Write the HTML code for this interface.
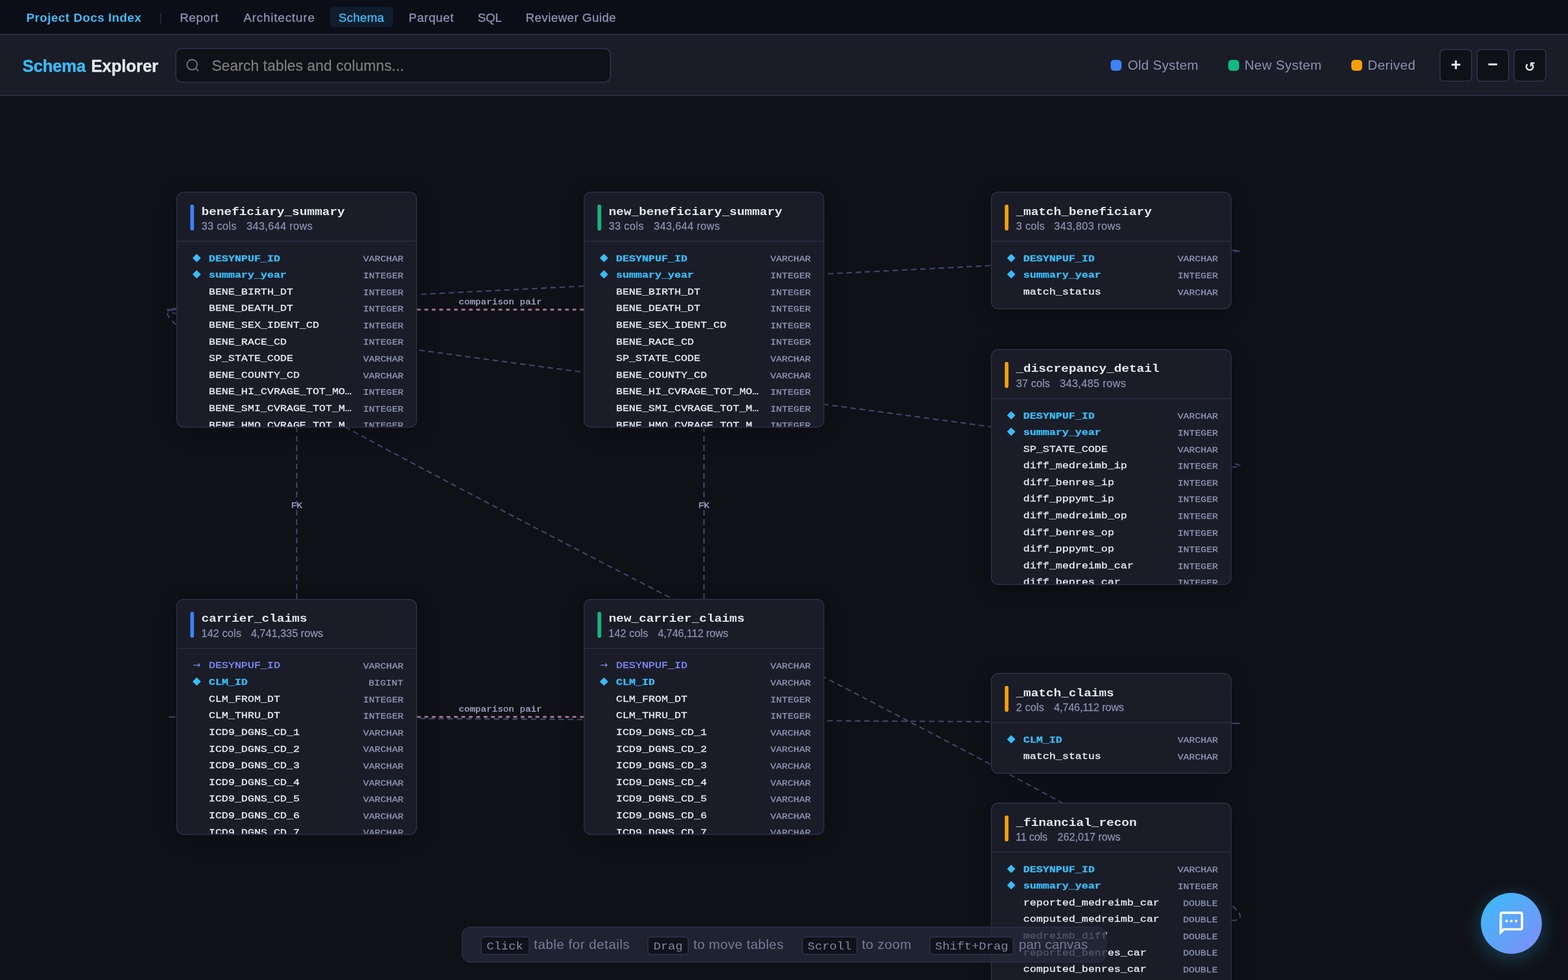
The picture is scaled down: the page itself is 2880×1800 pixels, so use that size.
<!DOCTYPE html>
<html lang="en">
<head>
<meta charset="utf-8">
<title>Schema Explorer</title>
<style>
*{box-sizing:border-box;margin:0;padding:0}
html,body{background:#0f1117;overflow:hidden;width:100%;height:100%}
body{font-family:"Liberation Sans",Arial,sans-serif;color:#e2e8f0}
#app{position:absolute;left:0;top:0;width:1440px;height:900px;overflow:hidden;zoom:2;will-change:transform}
@media (max-width:2000px){#app{zoom:1}}
a{text-decoration:none;color:inherit}
.tx{position:absolute;white-space:nowrap}
.topnav{position:absolute;left:0;top:0;width:1440px;height:32px;background:#0b0d17;border-bottom:1px solid #2d3148;font-size:11.2px;line-height:32px}
.topnav .brand{top:0.3px;font-weight:700;color:#38bdf8}
.topnav .sep{position:absolute;left:146.3px;top:0.35px;color:#2d3148;font-size:11px}
.topnav .nl{top:0.3px;color:#8b92b0;-webkit-text-stroke:.2px}
.topnav .nl.on{color:#38bdf8}
.topnav .pill{position:absolute;left:303.2px;top:6.15px;width:57.85px;height:18.85px;border-radius:4px;background:#0f1d2d}
.hdr{position:absolute;left:0;top:32px;width:1440px;height:56px;background:#1a1c28;border-bottom:1px solid #2d3148}
.hdr h1{position:absolute;left:0;top:1.4px;height:55px;line-height:55px;font-size:15.4px;font-weight:700;-webkit-text-stroke:.2px}
.hdr h1 .a{color:#38bdf8;top:0}
.hdr h1 .b{color:#e2e8f0;top:0}
.search{position:absolute;left:161px;top:12px;width:400px;height:32px;border:1px solid #2d3148;border-radius:6px;background:#0f1117}
.search .si{position:absolute;left:8px;top:8px;color:#6b7280}
.search .ph{top:0.5px;line-height:30px;font-size:13.6px;color:#7d7d7d;-webkit-text-stroke:.15px}
.legend i{position:absolute;top:23px;width:10px;height:10px;border-radius:3px}
.legend b{top:0.4px;line-height:55px;font-weight:400;font-size:12.3px;color:#8b92b0}
.zb{position:absolute;top:13px;width:30px;height:30px;border:1px solid #2d3148;border-radius:4px;background:#0f1117;color:#e2e8f0;text-align:center}
.zb .g{position:absolute;left:0;right:0;top:-.9px;line-height:28px;font-size:16px;font-weight:700}
.zb .rst{font-family:"DejaVu Sans",sans-serif;font-weight:700;font-size:12px;top:1.4px}
.canvas{position:absolute;left:0;top:88px;width:1440px;height:812px;overflow:hidden;background:#0f1117}
.world{position:absolute;left:0;top:0;width:0;height:0;transform-origin:0 0;transform:translate(162px,88px) scale(.85)}
.edges{position:absolute;left:0;top:0;overflow:visible}
.edges .e{fill:none;stroke:#40466a;stroke-width:1.5;stroke-dasharray:6 4}
.edges .e.cmp{stroke:#a37492;stroke-width:2;stroke-dasharray:4 4}
.edges .el{font-family:"Liberation Mono",monospace;font-size:8.85px;fill:#a3aaca;stroke:#a3aaca;stroke-width:.2px;text-anchor:middle}
.card{position:absolute;width:260px;overflow:hidden;background:#1a1c28;border:1px solid #2d3148;border-radius:8px;box-shadow:0 4px 20px rgba(0,0,0,.3)}
.ch{position:relative;height:53px;border-bottom:1px solid #2d3148}
.bar{position:absolute;left:14px;top:13px;width:4px;height:28px;border-radius:2px}
.old .bar{background:#3b82f6}.new .bar{background:#10b981}.der .bar{background:#f59e0b}
.nm{position:absolute;left:26px;top:11.1px;font-family:"Liberation Mono",monospace;font-weight:700;font-size:11.7px;line-height:20px;color:#e2e8f0;white-space:nowrap;transform:scaleX(1.1624);transform-origin:0 50%}
.mt{position:absolute;left:26px;top:29.2px;font-size:11.5px;line-height:14px;color:#8b92b0;white-space:nowrap}
.mt span{-webkit-text-stroke:.15px}

.cb{position:relative;padding:9px 0;height:200px;overflow:hidden}
.row{position:relative;height:18px;font-family:"Liberation Mono",monospace;font-size:10px;line-height:18px;white-space:nowrap}
.ic{position:absolute;left:12px;top:-1.4px;width:18px;text-align:center;font-family:"DejaVu Sans",sans-serif;font-size:11.6px;letter-spacing:0}
.ic.pk{color:#38bdf8}.ic.fk{color:#818cf8;font-size:10px;top:-1px}
.cn{position:absolute;left:34.1px;top:0.3px;color:#e2e8f0;-webkit-text-stroke:.22px;transform:scaleX(1.168);transform-origin:0 50%}
.row.pk .cn{color:#38bdf8;font-weight:700}
.row.fk .cn{color:#818cf8}
.ct{position:absolute;right:13.8px;top:0.8px;font-size:8.9px;color:#8b92b0;-webkit-text-stroke:.22px;transform:scaleX(1.168);transform-origin:100% 50%}
.hint{position:absolute;left:424px;top:763px;width:592px;height:33px;border:1px solid #2a2d40;border-radius:8px;background:rgba(36,40,56,.78);font-size:12.3px;line-height:31px;color:#767c96}
.hint kbd{position:absolute;top:8.05px;padding-top:1.1px;height:16.8px;font-family:"Liberation Mono",monospace;font-size:10.45px;line-height:14.6px;text-align:center;border:1px solid #2b2f45;border-radius:3px;background:#10111a;color:#80869f}
.hint em{font-style:normal;top:0}
.fab{position:absolute;left:1360px;top:820px;width:56px;height:56px;border-radius:50%;background:linear-gradient(135deg,#38bdf8,#818cf8);box-shadow:0 4px 20px rgba(56,189,248,.3);display:flex;align-items:center;justify-content:center}
.hint kbd span{display:inline-block;transform:scaleX(1.072)}

</style>
</head>
<body>
<div id="app">
<nav class="topnav">
<div class="pill"></div>
<a class="brand tx" id="brand" style="left:24.16px;letter-spacing:0.280px">Project Docs Index</a><span class="sep">|</span>
<a class="nl tx" id="n1" style="left:165.12px;letter-spacing:0.344px">Report</a>
<a class="nl tx" id="n2" style="left:223.62px;letter-spacing:0.498px">Architecture</a>
<a class="nl tx on" id="n3" style="left:310.88px;letter-spacing:0.168px">Schema</a>
<a class="nl tx" id="n4" style="left:375.28px;letter-spacing:0.347px">Parquet</a>
<a class="nl tx" id="n5" style="left:438.76px;letter-spacing:-0.160px">SQL</a>
<a class="nl tx" id="n6" style="left:482.70px;letter-spacing:0.255px">Reviewer Guide</a>
</nav>
<header class="hdr">
<h1><span class="a tx" id="t1a" style="left:20.64px;letter-spacing:-0.188px">Schema</span><span class="b tx" id="t1b" style="left:83.60px;letter-spacing:-0.094px">Explorer</span></h1>
<div class="search"><svg class="si" viewBox="0 0 24 24" width="14" height="14" fill="none" stroke="currentColor" stroke-width="2"><circle cx="11" cy="11" r="8"/><line x1="21" y1="21" x2="16.65" y2="16.65"/></svg><span class="ph tx" id="ph" style="left:32.44px;letter-spacing:0.051px">Search tables and columns...</span></div>
<div class="legend">
<i style="left:1020px;background:#3b82f6"></i><b class="tx" id="l1" style="left:1035.58px;letter-spacing:0.156px">Old System</b>
<i style="left:1128px;background:#10b981"></i><b class="tx" id="l2" style="left:1142.86px;letter-spacing:0.191px">New System</b>
<i style="left:1241px;background:#f59e0b"></i><b class="tx" id="l3" style="left:1255.94px;letter-spacing:0.253px">Derived</b>
</div>
<div class="zb" style="left:1322px"><span class="g plus">+</span></div>
<div class="zb" style="left:1356px"><span class="g minus">&minus;</span></div>
<div class="zb" style="left:1390px"><span class="g rst">&#8634;</span></div>
</header>
<main class="canvas">
<div class="world">
<svg class="edges" width="10" height="10"><path class="e" d="M1140,63.5 C1278,63.5 -138,127.5 0,127.5"/><path class="e" d="M1140,297.5 C1278,297.5 -138,127.5 0,127.5"/><path class="e" d="M1140,787.5 C1278,787.5 -138,127.5 0,127.5"/><path class="e" d="M1140,574.5 C1278,574.5 -138,567.5 0,567.5"/><path class="e" d="M130.0,440 L130.0,255"/><text class="el" transform="translate(130.0,341.5) scale(1.13,1)">FK</text><path class="e" d="M570.0,440 L570.0,255"/><text class="el" transform="translate(570.0,341.5) scale(1.13,1)">FK</text><path class="e cmp" d="M260,127.5 L440,127.5"/><text class="el" transform="translate(350.0,121.5) scale(1.13,1)">comparison pair</text><path class="e cmp" d="M260,567.5 L440,567.5"/><text class="el" transform="translate(350.0,561.5) scale(1.13,1)">comparison pair</text></svg>
<div class="card old" id="t1" style="left:0px;top:0px;height:255px"><div class="ch"><span class="bar"></span><div class="nm">beneficiary_summary</div><div class="mt"><span class="m1" style="margin-left:0.09px;letter-spacing:0.213px">33 cols</span><span class="m2" style="margin-left:10.75px;letter-spacing:0.204px">343,644 rows</span></div></div><div class="cb"><div class="row pk"><span class="ic pk">◆</span><span class="cn">DESYNPUF_ID</span><span class="ct">VARCHAR</span></div><div class="row pk"><span class="ic pk">◆</span><span class="cn">summary_year</span><span class="ct">INTEGER</span></div><div class="row "><span class="cn">BENE_BIRTH_DT</span><span class="ct">INTEGER</span></div><div class="row "><span class="cn">BENE_DEATH_DT</span><span class="ct">INTEGER</span></div><div class="row "><span class="cn">BENE_SEX_IDENT_CD</span><span class="ct">INTEGER</span></div><div class="row "><span class="cn">BENE_RACE_CD</span><span class="ct">INTEGER</span></div><div class="row "><span class="cn">SP_STATE_CODE</span><span class="ct">VARCHAR</span></div><div class="row "><span class="cn">BENE_COUNTY_CD</span><span class="ct">VARCHAR</span></div><div class="row "><span class="cn">BENE_HI_CVRAGE_TOT_MO…</span><span class="ct">INTEGER</span></div><div class="row "><span class="cn">BENE_SMI_CVRAGE_TOT_M…</span><span class="ct">INTEGER</span></div><div class="row "><span class="cn">BENE_HMO_CVRAGE_TOT_M…</span><span class="ct">INTEGER</span></div></div></div><div class="card new" id="t2" style="left:440px;top:0px;height:255px"><div class="ch"><span class="bar"></span><div class="nm">new_beneficiary_summary</div><div class="mt"><span class="m1" style="margin-left:0.09px;letter-spacing:0.213px">33 cols</span><span class="m2" style="margin-left:10.75px;letter-spacing:0.204px">343,644 rows</span></div></div><div class="cb"><div class="row pk"><span class="ic pk">◆</span><span class="cn">DESYNPUF_ID</span><span class="ct">VARCHAR</span></div><div class="row pk"><span class="ic pk">◆</span><span class="cn">summary_year</span><span class="ct">INTEGER</span></div><div class="row "><span class="cn">BENE_BIRTH_DT</span><span class="ct">INTEGER</span></div><div class="row "><span class="cn">BENE_DEATH_DT</span><span class="ct">INTEGER</span></div><div class="row "><span class="cn">BENE_SEX_IDENT_CD</span><span class="ct">INTEGER</span></div><div class="row "><span class="cn">BENE_RACE_CD</span><span class="ct">INTEGER</span></div><div class="row "><span class="cn">SP_STATE_CODE</span><span class="ct">VARCHAR</span></div><div class="row "><span class="cn">BENE_COUNTY_CD</span><span class="ct">VARCHAR</span></div><div class="row "><span class="cn">BENE_HI_CVRAGE_TOT_MO…</span><span class="ct">INTEGER</span></div><div class="row "><span class="cn">BENE_SMI_CVRAGE_TOT_M…</span><span class="ct">INTEGER</span></div><div class="row "><span class="cn">BENE_HMO_CVRAGE_TOT_M…</span><span class="ct">INTEGER</span></div></div></div><div class="card der" id="t3" style="left:880px;top:0px;height:127px"><div class="ch"><span class="bar"></span><div class="nm">_match_beneficiary</div><div class="mt"><span class="m1" style="margin-left:0.28px;letter-spacing:0.159px">3 cols</span><span class="m2" style="margin-left:9.99px;letter-spacing:0.268px">343,803 rows</span></div></div><div class="cb"><div class="row pk"><span class="ic pk">◆</span><span class="cn">DESYNPUF_ID</span><span class="ct">VARCHAR</span></div><div class="row pk"><span class="ic pk">◆</span><span class="cn">summary_year</span><span class="ct">INTEGER</span></div><div class="row "><span class="cn">match_status</span><span class="ct">VARCHAR</span></div></div></div><div class="card der" id="t4" style="left:880px;top:170px;height:255px"><div class="ch"><span class="bar"></span><div class="nm">_discrepancy_detail</div><div class="mt"><span class="m1" style="margin-left:0.28px;letter-spacing:0.032px">37 cols</span><span class="m2" style="margin-left:10.51px;letter-spacing:0.213px">343,485 rows</span></div></div><div class="cb"><div class="row pk"><span class="ic pk">◆</span><span class="cn">DESYNPUF_ID</span><span class="ct">VARCHAR</span></div><div class="row pk"><span class="ic pk">◆</span><span class="cn">summary_year</span><span class="ct">INTEGER</span></div><div class="row "><span class="cn">SP_STATE_CODE</span><span class="ct">VARCHAR</span></div><div class="row "><span class="cn">diff_medreimb_ip</span><span class="ct">INTEGER</span></div><div class="row "><span class="cn">diff_benres_ip</span><span class="ct">INTEGER</span></div><div class="row "><span class="cn">diff_pppymt_ip</span><span class="ct">INTEGER</span></div><div class="row "><span class="cn">diff_medreimb_op</span><span class="ct">INTEGER</span></div><div class="row "><span class="cn">diff_benres_op</span><span class="ct">INTEGER</span></div><div class="row "><span class="cn">diff_pppymt_op</span><span class="ct">INTEGER</span></div><div class="row "><span class="cn">diff_medreimb_car</span><span class="ct">INTEGER</span></div><div class="row "><span class="cn">diff_benres_car</span><span class="ct">INTEGER</span></div></div></div><div class="card old" id="t5" style="left:0px;top:440px;height:255px"><div class="ch"><span class="bar"></span><div class="nm">carrier_claims</div><div class="mt"><span class="m1" style="margin-left:-0.14px;letter-spacing:0.056px">142 cols</span><span class="m2" style="margin-left:10.42px;letter-spacing:-0.050px">4,741,335 rows</span></div></div><div class="cb"><div class="row fk"><span class="ic fk">→</span><span class="cn">DESYNPUF_ID</span><span class="ct">VARCHAR</span></div><div class="row pk"><span class="ic pk">◆</span><span class="cn">CLM_ID</span><span class="ct">BIGINT</span></div><div class="row "><span class="cn">CLM_FROM_DT</span><span class="ct">INTEGER</span></div><div class="row "><span class="cn">CLM_THRU_DT</span><span class="ct">INTEGER</span></div><div class="row "><span class="cn">ICD9_DGNS_CD_1</span><span class="ct">VARCHAR</span></div><div class="row "><span class="cn">ICD9_DGNS_CD_2</span><span class="ct">VARCHAR</span></div><div class="row "><span class="cn">ICD9_DGNS_CD_3</span><span class="ct">VARCHAR</span></div><div class="row "><span class="cn">ICD9_DGNS_CD_4</span><span class="ct">VARCHAR</span></div><div class="row "><span class="cn">ICD9_DGNS_CD_5</span><span class="ct">VARCHAR</span></div><div class="row "><span class="cn">ICD9_DGNS_CD_6</span><span class="ct">VARCHAR</span></div><div class="row "><span class="cn">ICD9_DGNS_CD_7</span><span class="ct">VARCHAR</span></div></div></div><div class="card new" id="t6" style="left:440px;top:440px;height:255px"><div class="ch"><span class="bar"></span><div class="nm">new_carrier_claims</div><div class="mt"><span class="m1" style="margin-left:-0.19px;letter-spacing:0.009px">142 cols</span><span class="m2" style="margin-left:10.37px;letter-spacing:-0.122px">4,746,112 rows</span></div></div><div class="cb"><div class="row fk"><span class="ic fk">→</span><span class="cn">DESYNPUF_ID</span><span class="ct">VARCHAR</span></div><div class="row pk"><span class="ic pk">◆</span><span class="cn">CLM_ID</span><span class="ct">VARCHAR</span></div><div class="row "><span class="cn">CLM_FROM_DT</span><span class="ct">INTEGER</span></div><div class="row "><span class="cn">CLM_THRU_DT</span><span class="ct">INTEGER</span></div><div class="row "><span class="cn">ICD9_DGNS_CD_1</span><span class="ct">VARCHAR</span></div><div class="row "><span class="cn">ICD9_DGNS_CD_2</span><span class="ct">VARCHAR</span></div><div class="row "><span class="cn">ICD9_DGNS_CD_3</span><span class="ct">VARCHAR</span></div><div class="row "><span class="cn">ICD9_DGNS_CD_4</span><span class="ct">VARCHAR</span></div><div class="row "><span class="cn">ICD9_DGNS_CD_5</span><span class="ct">VARCHAR</span></div><div class="row "><span class="cn">ICD9_DGNS_CD_6</span><span class="ct">VARCHAR</span></div><div class="row "><span class="cn">ICD9_DGNS_CD_7</span><span class="ct">VARCHAR</span></div></div></div><div class="card der" id="t7" style="left:880px;top:520px;height:109px"><div class="ch"><span class="bar"></span><div class="nm">_match_claims</div><div class="mt"><span class="m1" style="margin-left:0.23px;letter-spacing:0.046px">2 cols</span><span class="m2" style="margin-left:10.61px;letter-spacing:-0.158px">4,746,112 rows</span></div></div><div class="cb"><div class="row pk"><span class="ic pk">◆</span><span class="cn">CLM_ID</span><span class="ct">VARCHAR</span></div><div class="row "><span class="cn">match_status</span><span class="ct">VARCHAR</span></div></div></div><div class="card der" id="t8" style="left:880px;top:660px;height:255px"><div class="ch"><span class="bar"></span><div class="nm">_financial_recon</div><div class="mt"><span class="m1" style="margin-left:-0.19px;letter-spacing:-0.203px">11 cols</span><span class="m2" style="margin-left:10.94px;letter-spacing:-0.087px">262,017 rows</span></div></div><div class="cb"><div class="row pk"><span class="ic pk">◆</span><span class="cn">DESYNPUF_ID</span><span class="ct">VARCHAR</span></div><div class="row pk"><span class="ic pk">◆</span><span class="cn">summary_year</span><span class="ct">INTEGER</span></div><div class="row "><span class="cn">reported_medreimb_car</span><span class="ct">DOUBLE</span></div><div class="row "><span class="cn">computed_medreimb_car</span><span class="ct">DOUBLE</span></div><div class="row "><span class="cn">medreimb_diff</span><span class="ct">DOUBLE</span></div><div class="row "><span class="cn">reported_benres_car</span><span class="ct">DOUBLE</span></div><div class="row "><span class="cn">computed_benres_car</span><span class="ct">DOUBLE</span></div></div></div>
</div>
<div class="hint">
<kbd style="left:16.25px;width:45.3px"><span>Click</span></kbd><em class="tx" id="h1" style="left:65.26px;letter-spacing:0.280px">table for details</em>
<kbd style="left:169.35px;width:38.1px"><span>Drag</span></kbd><em class="tx" id="h2" style="left:211.74px;letter-spacing:0.212px">to move tables</em>
<kbd style="left:311.3px;width:51.1px"><span>Scroll</span></kbd><em class="tx" id="h3" style="left:366.48px;letter-spacing:0.280px">to zoom</em>
<kbd style="left:428.3px;width:77.9px"><span>Shift+Drag</span></kbd><em class="tx" id="h4" style="left:510.60px;letter-spacing:0.057px">pan canvas</em>
</div>
</main>
<div class="fab"><svg viewBox="0 0 24 24" width="26" height="26" fill="#fff"><path d="M20 2H4c-1.1 0-2 .9-2 2v18l4-4h14c1.1 0 2-.9 2-2V4c0-1.1-.9-2-2-2zm0 14H5.17L4 17.17V4h16v12zM7 9h2v2H7zm8 0h2v2h-2zm-4 0h2v2h-2z"/></svg></div>
</div>
</body>
</html>
